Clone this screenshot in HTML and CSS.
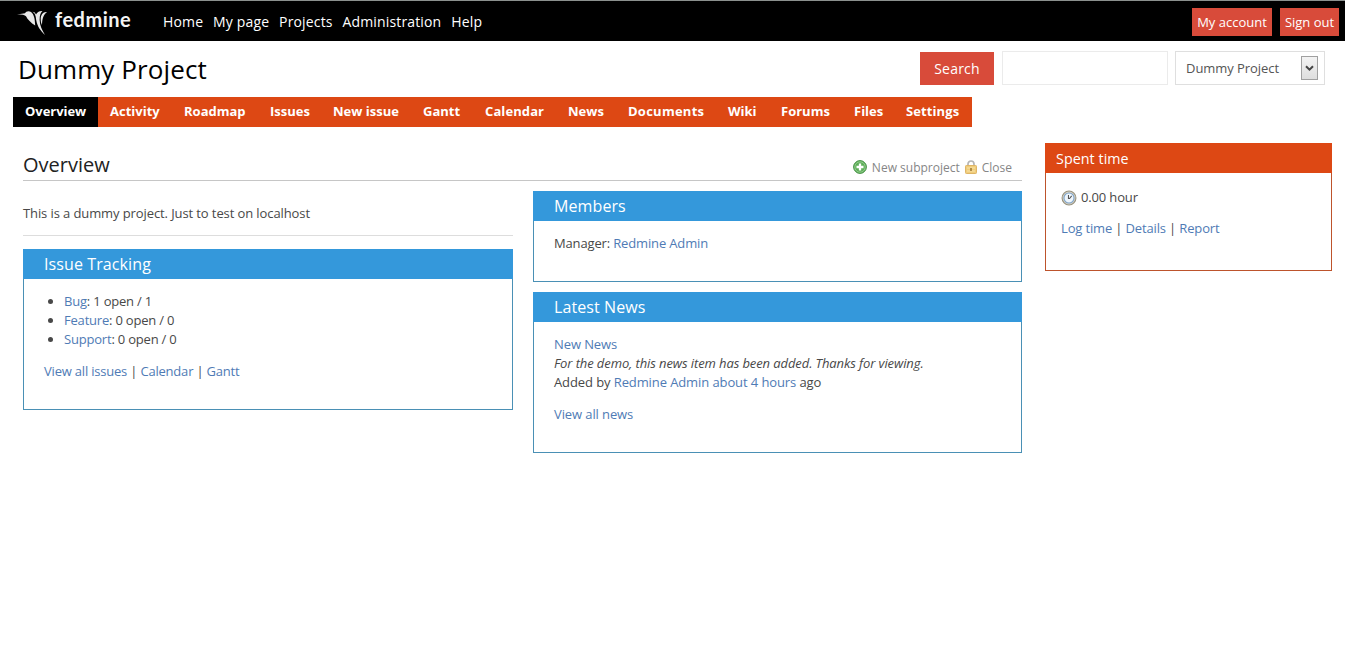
FILE: index.html
```html
<!DOCTYPE html>
<html lang="en">
<head>
<meta charset="utf-8">
<title>Overview - Dummy Project</title>
<link rel="stylesheet" href="styles.css">
</head>
<body>
<div class="top-menu">
  <a class="logo" href="#">
    <svg class="bird" viewBox="0 0 30 26" width="30" height="26">
      <path d="M0 5.500 L8 4.200 C9 2 12 1.500 14 3 C17 5.500 17.800 9 18.200 16.500 C14 14 10.500 10.500 9 7.300 C8 5.800 5 5.500 0 5.500 Z"/>
      <path d="M15.500 2.800 C18.500 4.500 18.800 8 19.300 11.500 C20.500 17.500 23 21 28 26 C25 21 22.800 16.500 22.600 11 C22.500 6 24 3 25.500 2 C22 1.800 20 3.500 19 5.500 C18 3.500 17 2.800 15.500 2.800 Z"/>
      <path d="M30 3 C26 2.500 23.700 6 23.700 10 C23.700 12.500 24.200 14.500 25 16 C25.200 10.500 26 6 30 3 Z"/>
    </svg>
    <span class="wordmark">fedmine</span>
  </a>
  <nav class="main-links">
    <a href="#">Home</a><a href="#">My page</a><a href="#">Projects</a><a href="#">Administration</a><a href="#">Help</a>
  </nav>
  <div class="account">
    <a class="account-mine" href="#">My account</a><a class="account-out" href="#">Sign out</a>
  </div>
</div>
<header class="header">
  <h1>Dummy Project</h1>
  <div class="quick-search">
    <a class="search-button" href="#">Search</a>
    <input class="search-input" type="text" aria-label="Search">
    <div class="project-select"><span>Dummy Project</span>
      <span class="arrow"><svg width="9" height="7" viewBox="0 0 9 7"><path d="M1 1.200 L4.500 4.700 L8 1.200" fill="none" stroke="#444" stroke-width="2"/></svg></span>
    </div>
  </div>
</header>
<nav class="tabs">
  <a class="selected" href="#">Overview</a><a class="activity" href="#">Activity</a><a class="roadmap" href="#">Roadmap</a><a class="issues" href="#">Issues</a><a class="new-issue" href="#">New issue</a><a class="gantt" href="#">Gantt</a><a class="calendar" href="#">Calendar</a><a class="news" href="#">News</a><a class="documents" href="#">Documents</a><a class="wiki" href="#">Wiki</a><a class="forums" href="#">Forums</a><a class="files" href="#">Files</a><a class="settings" href="#">Settings</a>
</nav>
<div class="main">
  <main class="content">
    <div class="title-row">
      <h2>Overview</h2>
      <div class="contextual">
        <svg width="14" height="14" viewBox="0 0 14 14"><circle cx="7" cy="7" r="6.400" fill="#5cae57" stroke="#479247"/><circle cx="7" cy="7" r="5.200" fill="none" stroke="#a6d6a0" stroke-width=".7"/><path d="M7 3.500v7M3.500 7h7" stroke="#fff" stroke-width="2.300"/></svg>
        <a href="#">New subproject</a>
        <svg class="lock" width="12" height="14" viewBox="0 0 12 14"><path d="M3 6V4a3 3 0 0 1 6 0v2" fill="none" stroke="#b5b5b5" stroke-width="1.700"/><rect x=".5" y="5.500" width="11" height="8" rx=".8" fill="#f0cd7b" stroke="#dfb566"/><path d="M2 8h8M2 11h8" stroke="#f8e2aa"/><path d="M6 8v3" stroke="#9b7430" stroke-width="1.500"/></svg>
        <a href="#">Close</a>
      </div>
    </div>
    <div class="columns">
      <div class="column">
        <p class="description">This is a dummy project. Just to test on localhost</p>
        <section class="box">
          <h3>Issue Tracking</h3>
          <div class="box-body tracking">
            <ul>
              <li><a href="#">Bug</a>: 1 open / 1</li>
              <li><a href="#">Feature</a>: 0 open / 0</li>
              <li><a href="#">Support</a>: 0 open / 0</li>
            </ul>
            <p><a href="#">View all issues</a> | <a href="#">Calendar</a> | <a href="#">Gantt</a></p>
          </div>
        </section>
      </div>
      <div class="column column-right">
        <section class="box">
          <h3>Members</h3>
          <div class="box-body"><p class="member">Manager: <a href="#">Redmine Admin</a></p></div>
        </section>
        <section class="box">
          <h3>Latest News</h3>
          <div class="box-body">
            <p><a href="#">New News</a><br><em>For the demo, this news item has been added. Thanks for viewing.</em><br>Added by <a href="#">Redmine Admin</a> <a href="#">about 4 hours</a> ago</p>
            <p><a href="#">View all news</a></p>
          </div>
        </section>
      </div>
    </div>
  </main>
  <aside class="sidebar">
    <h3>Spent time</h3>
    <div class="sidebar-body">
      <p class="hours"><svg width="16" height="16" viewBox="0 0 15 15"><circle cx="7.500" cy="7.500" r="6.500" fill="#d7d1c2" stroke="#95917f"/><circle cx="7.500" cy="7.500" r="4.700" fill="#eef6fd" stroke="#7da3ca"/><path d="M7 4.800V8H8L10 5.500" fill="none" stroke="#555"/></svg><span>0.00 hour</span></p>
      <p><a href="#">Log time</a> | <a href="#">Details</a> | <a href="#">Report</a></p>
    </div>
  </aside>
</div>
</body>
</html>
```
FILE: styles.css
```css
* { box-sizing: border-box; }
body { margin: 0; background: #fff; color: #484848; font: 13px/19px "Open Sans", sans-serif; letter-spacing: -.1px; }
a { color: #4f7bb5; text-decoration: none; }
h1, h2, h3, p, ul { margin: 0; font-weight: 400; }
svg { display: block; flex: none; }

.top-menu { display: flex; height: 41px; padding-right: 6px; background: #000; border-top: 1px solid #8b908e; }
.logo { display: flex; width: 163px; padding: 8px 0 0 17px; color: #f4f4f4; }
.bird { fill: #e8e8e8; }
.wordmark { margin: -2px 0 0 8px; font: 700 20px/24px Lato, sans-serif; letter-spacing: .5px; }
.main-links { display: flex; gap: 9.900px; padding-top: 11px; font-size: 14px; line-height: 19px; letter-spacing: .15px; }
.main-links a { color: #fff; }
.account { display: flex; gap: 8px; margin-left: auto; padding-top: 7px; letter-spacing: 0; }
.account a { height: 28px; background: #d84b3a; color: #fff; line-height: 28px; text-align: center; white-space: nowrap; }
.account-mine { width: 80px; }
.account-out { width: 59px; }

.header { display: flex; justify-content: space-between; height: 56px; padding: 10px 20px 0 18px; }
h1 { color: #000; font-size: 26px; line-height: 37px; letter-spacing: .1px; }
.quick-search { display: flex; }
.search-button { width: 74px; height: 33px; margin: 1px 8px 0 0; background: #d84b3a; color: #fff; font-size: 14px; line-height: 33px; letter-spacing: .2px; text-align: center; }
.search-input { width: 166px; height: 34px; margin-right: 7px; border: 1px solid #ebebeb; }
.project-select { display: flex; align-items: center; justify-content: space-between; width: 150px; height: 34px; padding: 0 6px 0 10px; border: 1px solid #dfdfdf; color: #555; letter-spacing: -.05px; }
.arrow { display: flex; align-items: center; justify-content: center; width: 17px; height: 24px; border: 1px solid #a0a0a0; background: linear-gradient(#f3f3f3, #dedede); }

.tabs { display: flex; width: 959px; height: 30px; margin-left: 13px; background: #dd4814; letter-spacing: 0; }
.tabs a { padding-left: 12px; color: #fff; font-weight: 700; line-height: 29px; white-space: nowrap; }
.tabs .selected { width: 85px; background: #000; letter-spacing: -.05px; }
.tabs .activity { width: 74px; }
.tabs .roadmap { width: 86px; }
.tabs .issues { width: 63px; }
.tabs .new-issue { width: 90px; }
.tabs .gantt { width: 62px; }
.tabs .calendar { width: 83px; letter-spacing: .1px; }
.tabs .news { width: 60px; }
.tabs .documents { width: 100px; letter-spacing: .25px; }
.tabs .wiki { width: 53px; }
.tabs .forums { width: 73px; }
.tabs .files { width: 52px; }
.tabs .settings { width: 78px; letter-spacing: .1px; }

.main { display: flex; padding: 16px 13px 0 23px; }
.content { width: 999px; margin-right: 23px; }
.title-row { display: flex; justify-content: space-between; height: 38px; padding: 6px 10px 0 0; border-bottom: 1px solid #c6c6c6; }
h2 { color: #222; font-size: 20px; line-height: 31px; letter-spacing: 0; }
.contextual { display: flex; align-items: center; height: 36px; font-size: 12px; letter-spacing: 0; }
.contextual a { margin-left: 5px; color: #868686; }
.contextual .lock { margin-left: 5px; }
.columns { display: flex; justify-content: space-between; }
.column { width: 490px; }
.column-right { width: 489px; padding-top: 10px; }
.description { height: 55px; margin-bottom: 13px; padding-top: 23px; border-bottom: 1px solid #ddd; }
.box { margin-bottom: 10px; border: 1px solid #4a90b5; border-top: 0; }
.box h3 { height: 30px; margin: 0 -1px; padding-left: 21px; background: #3498db; color: #fff; font-size: 16px; line-height: 30px; letter-spacing: .1px; }
.box-body { padding: 13px 20px 25px; }
.tracking { letter-spacing: -.2px; }
.member { letter-spacing: -.15px; }
.box-body ul { margin-bottom: 13px; padding-left: 20px; }
.box-body p + p { margin-top: 13px; }
.box-body p:last-child { margin-bottom: 3px; }

.sidebar { width: 287px; height: 128px; border: 1px solid #bd532c; border-top: 0; }
.sidebar h3 { height: 30px; margin: 0 -1px; padding-left: 11px; background: #dd4814; color: #fff; font-size: 14.300px; line-height: 31px; letter-spacing: .05px; }
.sidebar-body { padding: 15px 15px 0; letter-spacing: -.15px; }
.hours { display: flex; align-items: center; gap: 4px; margin-bottom: 12px; }
```
